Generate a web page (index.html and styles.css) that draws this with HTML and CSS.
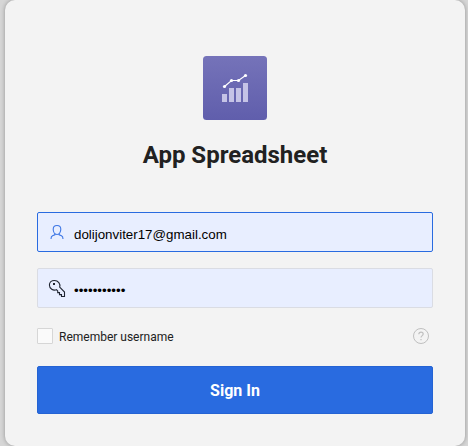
FILE: index.html
```html
<!DOCTYPE html>
<html lang="en">
<head>
<meta charset="utf-8">
<title>App Spreadsheet</title>
<link rel="stylesheet" href="styles.css">
</head>
<body>
<main class="card">
  <svg class="logo" viewBox="0 0 64 64" aria-hidden="true">
    <defs><linearGradient id="tile" x1="0" y1="0" x2="0" y2="1"><stop offset="0" stop-color="#7573b9"/><stop offset="1" stop-color="#605eac"/></linearGradient></defs>
    <rect width="64" height="64" rx="3.5" fill="url(#tile)"/>
    <path d="M19 38h5v8h-5zM26 32h5v14h-5zM33 32h5v14h-5zM40 27h5v19h-5z" fill="#c5c3e6"/>
    <path d="M21.5 30.5l7-6h7l7-5" fill="none" stroke="#fff" stroke-width="1.2"/>
    <g fill="#fff"><circle cx="21.5" cy="30.5" r="1.6"/><circle cx="28.5" cy="24.500" r="1.6"/><circle cx="35.5" cy="24.5" r="1.6"/><circle cx="42.5" cy="19.5" r="1.6"/></g>
  </svg>
  <h1 class="title">App Spreadsheet</h1>
  <form class="form">
    <label class="field field-active">
      <svg class="field-icon" viewBox="1 -1 20 20" fill="none" stroke="#3d76e5" stroke-width="1.1" aria-hidden="true"><path d="M10 2.5c2.2 0 3.8 1.5 3.8 3.8 0 2.8-1.600 5.200-3.800 5.200S6.200 9.100 6.200 6.300C6.200 4 7.800 2.500 10 2.500zM7.800 10.800v1l-2.300 1c-1.100.5-1.500 1.200-1.500 3.200M12.200 10.800v1l2.300 1c1.100.5 1.500 1.200 1.500 3.200"/></svg>
      <input class="input" type="text" value="dolijonviter17@gmail.com" aria-label="Username">
    </label>
    <label class="field">
      <svg class="field-icon" viewBox="1 -1 20 20" fill="none" stroke="#1f2430" stroke-width="1.1" aria-hidden="true"><path d="M12.700 8.200L17.500 13v4.500h-3v-1.900h-2v-2h-1.800v-1.700l-1.200-1.200c-3.300 1.400-7.100-1-7.100-4.700C2.400 3.400 4.600 1.500 7.400 1.500c3.800 0 6.300 3.200 5.300 6.700z"/><rect x="6" y="4" width="2" height="2" fill="#1f2430" stroke="none"/></svg>
      <input class="input" type="password" value="abcdefghijk" aria-label="Password">
    </label>
    <div class="options">
      <label class="remember"><input class="check" type="checkbox"><span class="remember-text">Remember username</span></label>
      <svg class="help" viewBox="0 0 16 16" fill="none" stroke="#bfbfbf" aria-hidden="true"><circle cx="8" cy="8" r="7.500"/><path d="M5.800 6.300c0-1.400.9-2.200 2.200-2.200s2.200.8 2.200 2c0 1.500-2.200 1.600-2.200 3.500M8 11v1.300" stroke-width="1.200"/></svg>
    </div>
    <button class="submit" type="button">Sign In</button>
  </form>
</main>
</body>
</html>
```
FILE: styles.css
```css
* { box-sizing: border-box; }
body {
  margin: 0;
  padding: 0 3px 0 5px;
  height: 446px;
  overflow: hidden;
  background: #d6d6d6;
  font-family: Roboto, sans-serif;
  color: #212121;
}
.card {
  height: 446px;
  padding: 56px 32px 32px;
  border-radius: 10px;
  background: #f3f3f3;
  box-shadow: 0 0 4px rgba(0, 0, 0, .32);
  display: flex;
  flex-direction: column;
}
.logo { width: 64px; height: 64px; align-self: center; }
.title {
  margin: 19px 0 41px;
  font-size: 24px;
  line-height: 32px;
  font-weight: 700;
  text-align: center;
}
.form { display: flex; flex-direction: column; }
.field {
  display: flex;
  align-items: center;
  height: 40px;
  margin-bottom: 16px;
  padding: 0 10px;
  border: 1px solid #dadce3;
  border-radius: 2px;
  background: #e8eeff;
}
.field-active { border-color: #296be0; }
.field-icon { width: 20px; height: 20px; flex: none; }
.input {
  flex: 1;
  min-width: 0;
  height: 38px;
  margin: 0;
  padding: 4px 0 0 6px;
  border: 0;
  outline: 0;
  background: transparent;
  color: #000;
  font: 13.333px "Liberation Sans", sans-serif;
}
.options {
  display: flex;
  align-items: center;
  justify-content: space-between;
  height: 24px;
  margin: 0 0 18px;
  padding-right: 4px;
}
.remember { display: flex; align-items: center; gap: 6px; font-size: 12px; }
.remember-text { padding-top: 2px; }
.check {
  appearance: none;
  width: 16px;
  height: 16px;
  margin: 0;
  border: 1px solid #d6d6d6;
  border-radius: 1px;
  background: #fafafa;
}
.help { width: 16px; height: 16px; }
.submit {
  height: 48px;
  border: 1px solid #2463d3;
  border-radius: 2px;
  background: #296be0;
  color: #fff;
  font: 700 16px Roboto, sans-serif;
}
```
